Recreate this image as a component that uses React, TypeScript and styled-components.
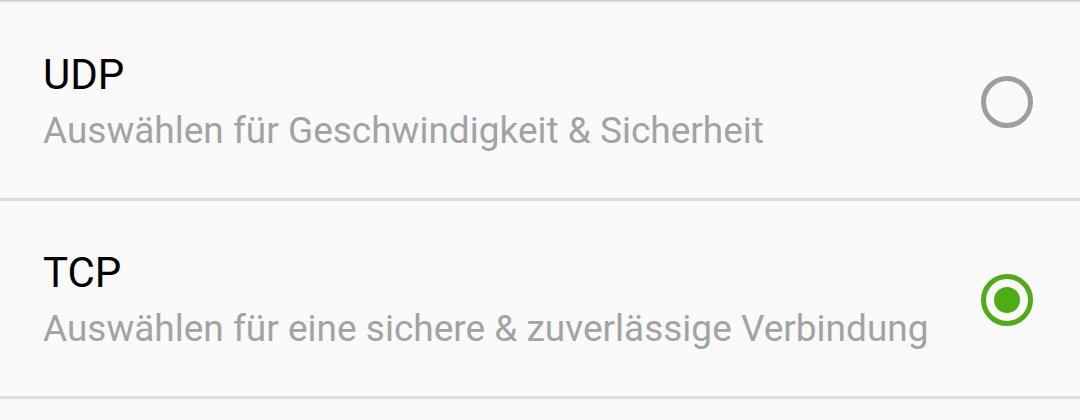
import React, {useState} from 'react';
import styled, {createGlobalStyle} from 'styled-components';

const GlobalStyle = createGlobalStyle`
html, body {
margin: 0;
padding: 0;
background: #fafafa;
}
body {
font-family: Roboto, "Noto Sans", "Liberation Sans", sans-serif;
}
`;

const Screen = styled.div`
width: 1080px;
height: 420px;
overflow: hidden;
background: #fafafa;
display: flex;
flex-direction: column;
`;

const TopShadow = styled.div`
height: 3px;
flex-shrink: 0;
background: linear-gradient(#bdbdbd, #e4e4e4 50%, #f6f6f6);
`;

// 195px row + 3px divider
const Row = styled.label`
display: flex;
align-items: center;
justify-content: space-between;
flex-shrink: 0;
height: 103px;
padding: 47px 47px 45px 43px;
border-bottom: 3px solid #dddddd;
cursor: pointer;
`;

const Texts = styled.div`
display: flex;
flex-direction: column;
gap: 9px;
`;

const Title = styled.div`
font-size: 42px;
line-height: 50px;
color: #000000;
`;

const Summary = styled.div`
font-size: 37px;
line-height: 44px;
color: #a3a3a3;
`;

const RadioIcon = ({checked}: {checked: boolean}) => (
    <svg width="52" height="52" viewBox="0 0 52 52">
        <circle cx="26" cy="26" r="23.5" fill="none" stroke={checked ? '#4fad14' : '#9e9e9e'} strokeWidth="5"/>
        {checked && <circle cx="26" cy="26" r="13" fill="#4fad14"/>}
    </svg>
);

const options = [
    {id: 'udp', title: 'UDP', summary: 'Auswählen für Geschwindigkeit & Sicherheit'},
    {id: 'tcp', title: 'TCP', summary: 'Auswählen für eine sichere & zuverlässige Verbindung'},
];

const App = () => {
    const [protocol, setProtocol] = useState('tcp');

    return (
        <Screen>
            <GlobalStyle/>
            <TopShadow/>
            {options.map(o => (
                <Row key={o.id} onClick={() => setProtocol(o.id)}>
                    <Texts>
                        <Title>{o.title}</Title>
                        <Summary>{o.summary}</Summary>
                    </Texts>
                    <RadioIcon checked={protocol === o.id}/>
                </Row>
            ))}
        </Screen>
    );
};

export default App;
